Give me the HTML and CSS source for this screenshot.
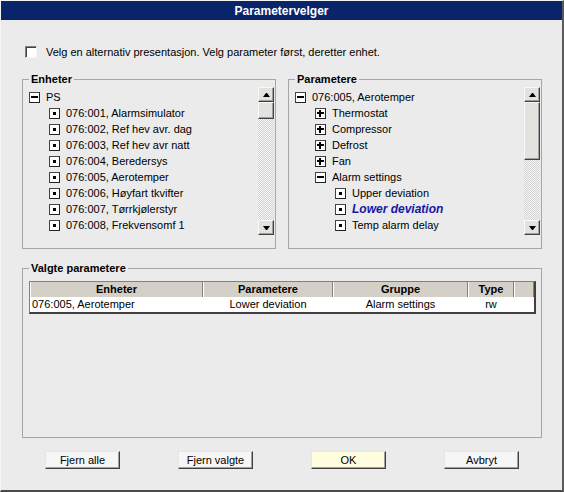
FILE: index.html
```html
<!DOCTYPE html>
<html lang="no">
<head>
<meta charset="utf-8">
<title>Parametervelger</title>
<link rel="stylesheet" href="styles.css">
</head>
<body>
<div class="window">
  <div class="titlebar">Parametervelger</div>
  <div class="content">
    <label class="option"><span class="checkbox"></span><span>Velg en alternativ presentasjon. Velg parameter først, deretter enhet.</span></label>

    <div class="panes">
      <div class="group">
        <div class="legend">Enheter</div>
        <div class="pane">
          <div class="tree">
            <div class="row"><span class="ico minus"></span>PS</div>
            <div class="row lvl1"><span class="ico leaf"></span>076:001, Alarmsimulator</div>
            <div class="row lvl1"><span class="ico leaf"></span>076:002, Ref hev avr. dag</div>
            <div class="row lvl1"><span class="ico leaf"></span>076:003, Ref hev avr natt</div>
            <div class="row lvl1"><span class="ico leaf"></span>076:004, Beredersys</div>
            <div class="row lvl1"><span class="ico leaf"></span>076:005, Aerotemper</div>
            <div class="row lvl1"><span class="ico leaf"></span>076:006, Høyfart tkvifter</div>
            <div class="row lvl1"><span class="ico leaf"></span>076:007, Tørrkjølerstyr</div>
            <div class="row lvl1"><span class="ico leaf"></span>076:008, Frekvensomf 1</div>
            <div class="row lvl1 partial"><span class="ico leaf"></span></div>
          </div>
          <div class="scrollbar">
            <div class="sb-btn up"></div>
            <div class="sb-thumb thumb-small"></div>
            <div class="sb-track"></div>
            <div class="sb-btn down"></div>
          </div>
        </div>
      </div>

      <div class="group">
        <div class="legend">Parametere</div>
        <div class="pane">
          <div class="tree">
            <div class="row"><span class="ico minus"></span>076:005, Aerotemper</div>
            <div class="row lvl1"><span class="ico plus"></span>Thermostat</div>
            <div class="row lvl1"><span class="ico plus"></span>Compressor</div>
            <div class="row lvl1"><span class="ico plus"></span>Defrost</div>
            <div class="row lvl1"><span class="ico plus"></span>Fan</div>
            <div class="row lvl1"><span class="ico minus"></span>Alarm settings</div>
            <div class="row lvl2"><span class="ico leaf"></span>Upper deviation</div>
            <div class="row lvl2"><span class="ico leaf"></span><span class="sel">Lower deviation</span></div>
            <div class="row lvl2"><span class="ico leaf"></span>Temp alarm delay</div>
            <div class="row lvl2 partial"><span class="ico leaf"></span></div>
          </div>
          <div class="scrollbar">
            <div class="sb-btn up"></div>
            <div class="sb-thumb thumb-large"></div>
            <div class="sb-track"></div>
            <div class="sb-btn down"></div>
          </div>
        </div>
      </div>
    </div>

    <div class="group selected-group">
      <div class="legend">Valgte parametere</div>
      <div class="table">
        <div class="thead">
          <div>Enheter</div>
          <div>Parametere</div>
          <div>Gruppe</div>
          <div>Type</div>
          <div></div>
        </div>
        <div class="trow">
          <div class="left">076:005, Aerotemper</div>
          <div>Lower deviation</div>
          <div>Alarm settings</div>
          <div>rw</div>
          <div></div>
        </div>
      </div>
    </div>

    <div class="buttons">
      <button class="btn">Fjern alle</button>
      <button class="btn">Fjern valgte</button>
      <button class="btn ok">OK</button>
      <button class="btn">Avbryt</button>
    </div>
  </div>
</div>
</body>
</html>
```

FILE: styles.css
```css
* { box-sizing: border-box; }
html, body { margin: 0; padding: 0; }
body {
  width: 564px;
  height: 492px;
  overflow: hidden;
  font: 11px "Liberation Sans", Arial, sans-serif;
  color: #000;
  background: #ebebeb;
}
.window {
  width: 564px;
  height: 492px;
  background: #ebebeb;
  border-top: 1px solid #f4f4f4;
  border-left: 1px solid #f4f4f4;
  border-right: 2px solid #5a5a5a;
  border-bottom: 2px solid #4a4a4a;
  display: flex;
  flex-direction: column;
}
.titlebar {
  height: 19px;
  flex: none;
  background: #0a246a;
  color: #fff;
  font-weight: bold;
  font-size: 12px;
  display: flex;
  align-items: center;
  justify-content: center;
}
.content {
  flex: 1;
  padding: 26px 0 0 21px;
  display: flex;
  flex-direction: column;
}
.option {
  display: flex;
  align-items: center;
  height: 12px;
  margin-left: 3px;
}
.checkbox {
  width: 12px;
  height: 12px;
  flex: none;
  background: #fff;
  border: 1px solid;
  border-color: #808080 #f4f4f4 #f4f4f4 #808080;
  box-shadow: inset 1px 1px #404040;
  margin-right: 9px;
}
.panes {
  display: grid;
  grid-template-columns: 254px 254px;
  column-gap: 12px;
  margin-top: 21px;
}
.group {
  border: 1px solid #a6a6a6;
  height: 170px;
  display: flex;
  flex-direction: column;
}
.legend {
  align-self: flex-start;
  margin: -7px 0 0 6px;
  padding: 0 2px;
  background: #ebebeb;
  font-weight: bold;
  line-height: 13px;
  height: 13px;
}
.pane {
  display: flex;
  margin-top: 1px;
  height: 148px;
  padding-right: 1px;
}
.tree {
  flex: 1;
  overflow: hidden;
  padding: 2px 0 0 6px;
}
.row {
  display: flex;
  align-items: center;
  height: 16px;
  white-space: nowrap;
}
.lvl1 { padding-left: 20px; }
.lvl2 { padding-left: 40px; }
.ico {
  width: 11px;
  height: 11px;
  flex: none;
  position: relative;
  background: #fff;
  border: 1px solid;
  border-color: #444 #222 #222 #444;
  margin-right: 6px;
}
.ico::before, .ico::after {
  content: "";
  position: absolute;
  background: #000;
}
.ico.minus::before { left: 1px; top: 3px; width: 7px; height: 2px; }
.ico.minus::after { display: none; }
.ico.plus::before { left: 1px; top: 3px; width: 7px; height: 2px; }
.ico.plus::after { left: 3px; top: 1px; width: 2px; height: 7px; }
.ico.leaf::before { left: 3px; top: 3px; width: 3px; height: 3px; }
.ico.leaf::after { display: none; }
.sel {
  color: #1616a8;
  font-weight: bold;
  font-style: italic;
  font-size: 12px;
}
.scrollbar {
  width: 16px;
  flex: none;
  display: flex;
  flex-direction: column;
}
.sb-btn, .sb-thumb {
  flex: none;
  background: #e4e2de;
  border: 1px solid;
  border-color: #f8f8f8 #404040 #404040 #f8f8f8;
  box-shadow: inset -1px -1px #a0a0a0;
}
.sb-btn {
  height: 15px;
  display: flex;
  align-items: center;
  justify-content: center;
}
.sb-btn::before {
  content: "";
  width: 1px;
  height: 0;
  border-left: 3px solid transparent;
  border-right: 3px solid transparent;
}
.sb-btn.up::before { border-bottom: 4px solid #000; }
.sb-btn.down::before { border-top: 4px solid #000; }
.thumb-small { height: 17px; }
.thumb-large { height: 58px; }
.sb-track {
  flex: 1;
  background: repeating-conic-gradient(#f6f6f6 0 25%, #d2d2d2 0 50%) 0 0 / 2px 2px;
}
.selected-group {
  width: 520px;
  margin-top: 19px;
}
.table {
  margin: 6px 0 0 6px;
  width: 507px;
  border-style: solid;
  border-width: 1px 2px 2px 1px;
  border-color: #808080 #404040 #404040 #808080;
}
.thead, .trow {
  display: grid;
  grid-template-columns: 173px 130px 135px 46px 1fr;
}
.thead > div {
  height: 15px;
  line-height: 15px;
  background: #d4d0c8;
  font-weight: bold;
  text-align: center;
  border-left: 1px solid #fff;
  border-right: 1px solid #808080;
}
.trow {
  background: #fff;
  height: 15px;
  line-height: 15px;
}
.trow > div { text-align: center; white-space: nowrap; }
.trow > .left { text-align: left; padding-left: 2px; }
.buttons {
  display: flex;
  justify-content: space-between;
  width: 474px;
  margin: 13px 0 0 23px;
}
.btn {
  width: 75px;
  height: 18px;
  padding: 0;
  font: 11px "Liberation Sans", Arial, sans-serif;
  color: #000;
  background: #f6f6f6;
  border: 1px solid;
  border-color: #e6e6e6 #404040 #404040 #e6e6e6;
  box-shadow: inset -1px -1px #a0a0a0;
  text-align: center;
}
.btn.ok { background: #ffffe0; }
```
